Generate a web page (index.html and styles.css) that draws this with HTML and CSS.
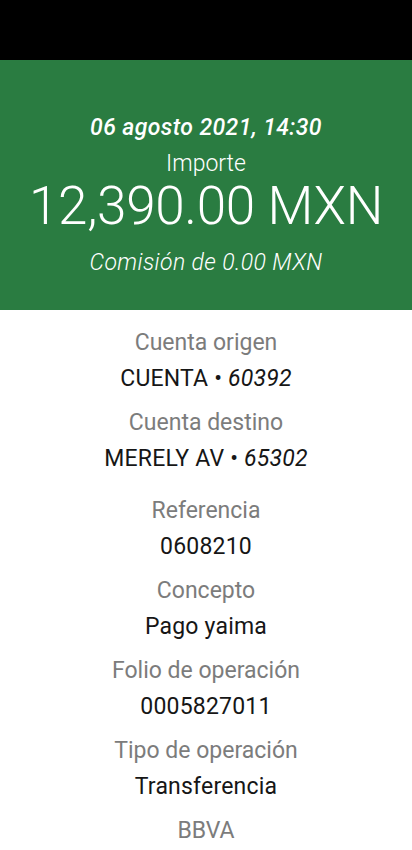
FILE: index.html
```html
<!DOCTYPE html>
<html lang="es">
<head>
<meta charset="utf-8">
<meta name="viewport" content="width=device-width, initial-scale=1">
<title>Comprobante</title>
<link rel="stylesheet" href="styles.css">
</head>
<body>
<div class="topbar"></div>
<section class="hero">
  <div class="date">06 agosto 2021, 14:30</div>
  <div class="importe">Importe</div>
  <div class="amount">12,390.00 MXN</div>
  <div class="fee">Comisión de 0.00 MXN</div>
</section>
<section class="details">
  <div class="item">
    <div class="label">Cuenta origen</div>
    <div class="value">CUENTA • <em>60392</em></div>
  </div>
  <div class="item">
    <div class="label">Cuenta destino</div>
    <div class="value">MERELY AV • <em>65302</em></div>
  </div>
  <div class="item item-gap">
    <div class="label">Referencia</div>
    <div class="value">0608210</div>
  </div>
  <div class="item">
    <div class="label">Concepto</div>
    <div class="value">Pago yaima</div>
  </div>
  <div class="item">
    <div class="label">Folio de operación</div>
    <div class="value">0005827011</div>
  </div>
  <div class="item">
    <div class="label">Tipo de operación</div>
    <div class="value">Transferencia</div>
  </div>
  <div class="item">
    <div class="label">BBVA</div>
  </div>
</section>
</body>
</html>
```

FILE: styles.css
```css
* { box-sizing: border-box; }
html, body { margin: 0; padding: 0; }
body {
  background: #ffffff;
  font-family: Roboto, "Liberation Sans", sans-serif;
  text-align: center;
  width: 412px;
  height: 850px;
  overflow: hidden;
}
.topbar {
  height: 60px;
  background: #000000;
}
.hero {
  background: #2a7c41;
  color: #ffffff;
  height: 250px;
  padding-top: 56px;
  display: flex;
  flex-direction: column;
  align-items: center;
}
.date {
  font-size: 23px;
  font-weight: 500;
  font-style: italic;
  line-height: 24px;
  letter-spacing: 0.4px;
}
.importe {
  font-size: 23px;
  font-weight: 300;
  line-height: 24px;
  margin-top: 12px;
}
.amount {
  font-size: 53px;
  font-weight: 300;
  line-height: 56px;
  letter-spacing: -0.3px;
  margin-top: 2px;
}
.fee {
  font-size: 23px;
  font-style: italic;
  font-weight: 300;
  line-height: 24px;
  letter-spacing: 0.4px;
  margin-top: 17px;
}
.details {
  padding-top: 19px;
  display: flex;
  flex-direction: column;
  gap: 16px;
}
.item {
  display: flex;
  flex-direction: column;
  gap: 8px;
}
.item-gap { margin-top: 8px; }
.label {
  color: #7c7c7c;
  font-size: 23px;
  line-height: 28px;
}
.value {
  color: #161616;
  font-size: 23px;
  line-height: 28px;
  letter-spacing: 0.2px;
}
.value em { font-style: italic; }
```
